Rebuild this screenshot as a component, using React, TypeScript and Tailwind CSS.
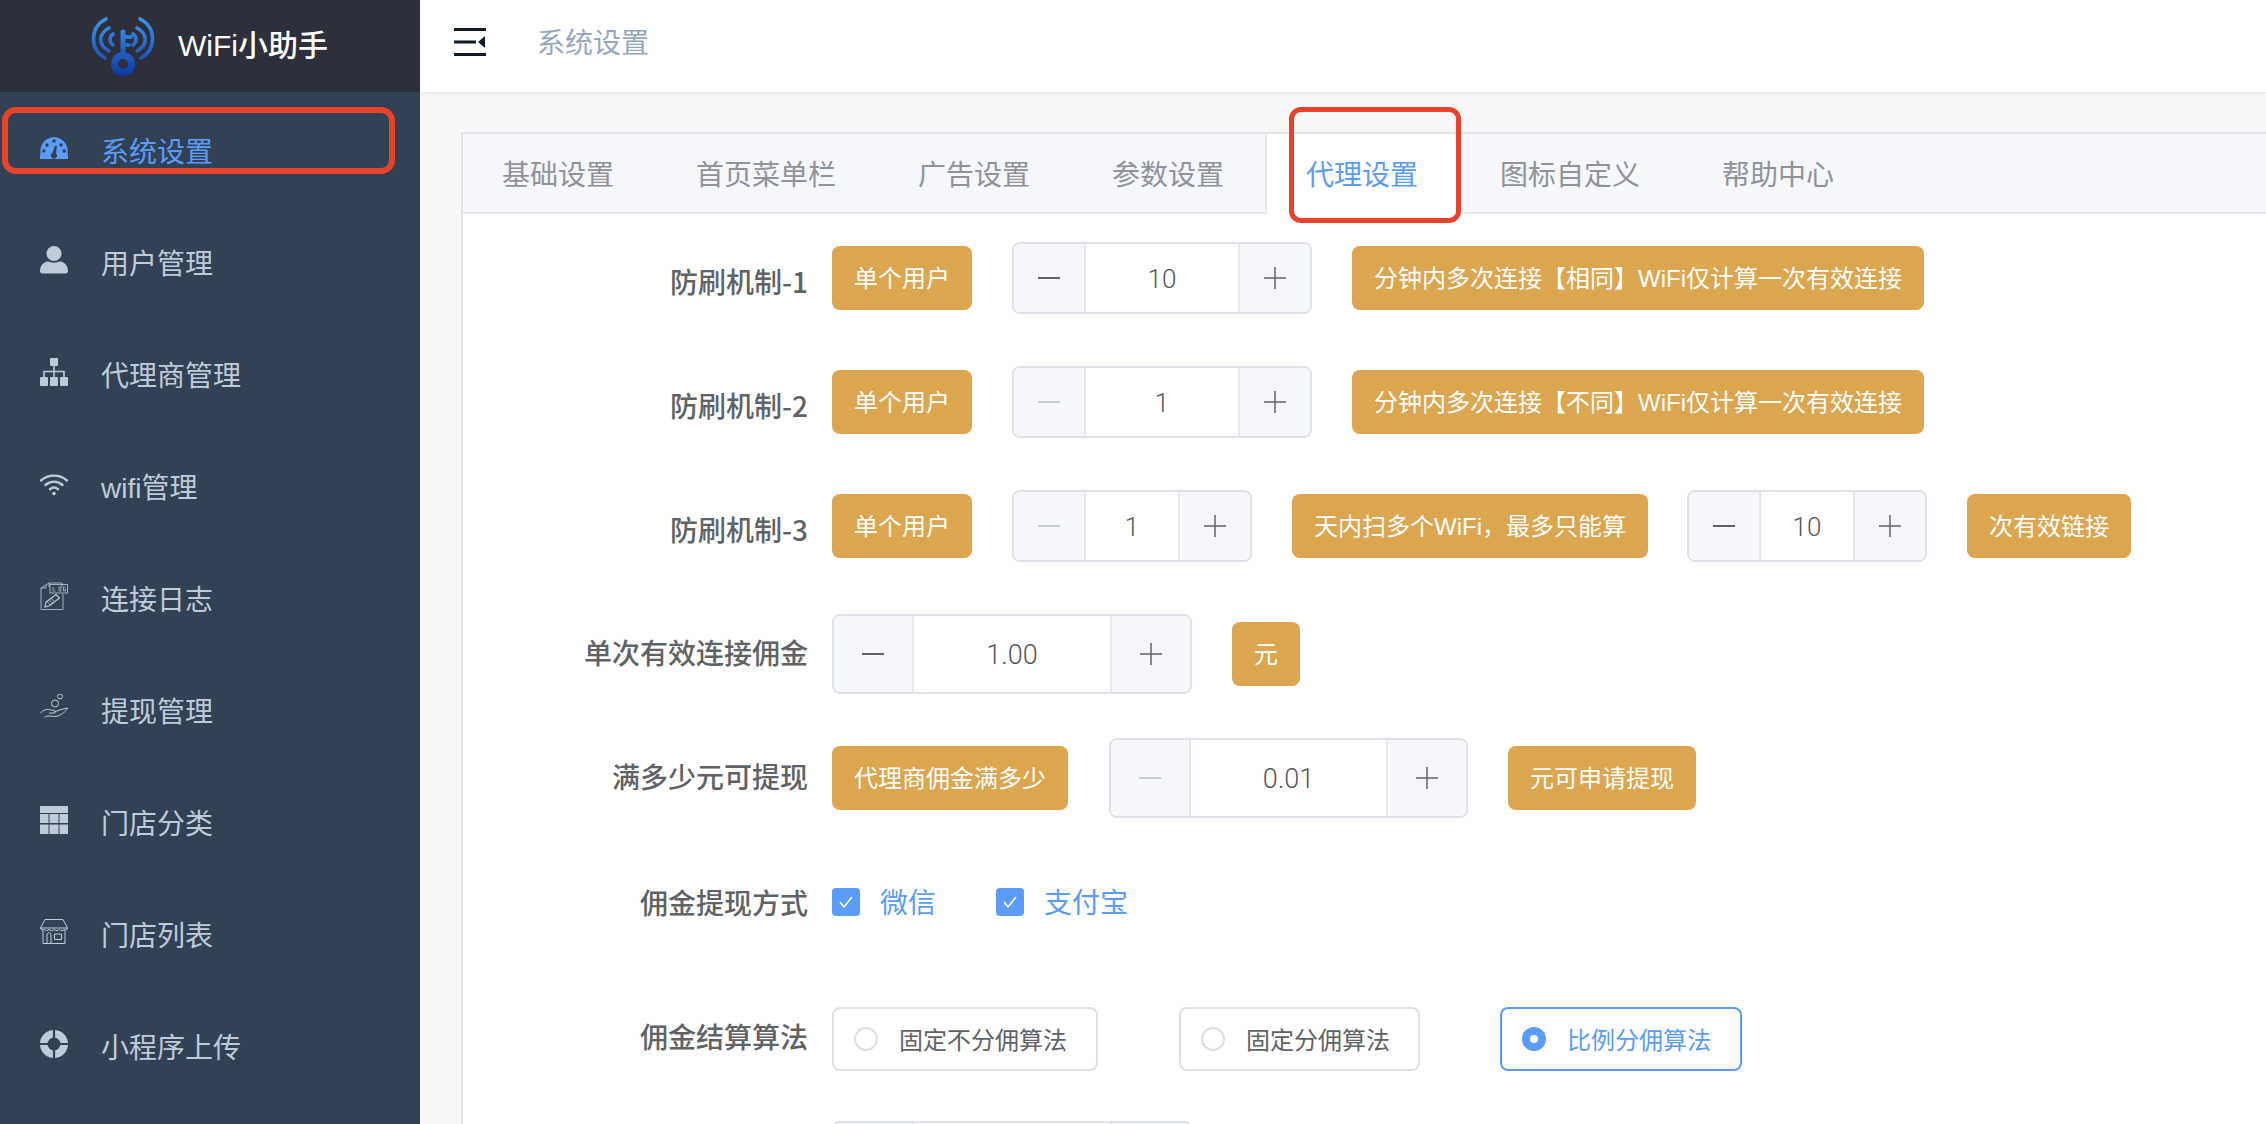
import { ReactNode } from 'react'

const iconProps = { width: 28, height: 28, viewBox: '0 0 28 28' }

function GaugeIcon() {
  return (
    <svg {...iconProps} fill="currentColor">
      <path d="M0 25c0-2 0-4 .5-6A14 14 0 0 1 14 3a14 14 0 0 1 13.5 16c.5 2 .5 4 .5 6z" />
      <g fill="#334155">
        <circle cx="3.800" cy="17" r="1.700" />
        <circle cx="7" cy="11" r="1.700" />
        <circle cx="14" cy="7" r="1.700" />
        <circle cx="21" cy="11" r="1.700" />
        <circle cx="24.200" cy="17" r="1.700" />
        <path d="M15.200 11.500l1.800.4-1 7.500a3 3 0 1 1-3.800-.3z" />
      </g>
    </svg>
  )
}

function UserIcon() {
  return (
    <svg {...iconProps} fill="currentColor">
      <circle cx="14" cy="7.500" r="7.500" />
      <path d="M0 25c0-5 3-9 8-9.500 4 1.500 8 1.500 12 0 5 .5 8 4.500 8 9.500 0 1.500-1 2.500-2.500 2.500h-23C1 27.500 0 26.500 0 25z" />
    </svg>
  )
}

function SitemapIcon() {
  return (
    <svg {...iconProps} fill="currentColor">
      <rect x="10" y="0" width="8" height="8" rx="1" />
      <rect x="0" y="19" width="8" height="9" rx="1" />
      <rect x="10" y="19" width="8" height="9" rx="1" />
      <rect x="20" y="19" width="8" height="9" rx="1" />
      <path d="M13.200 8h1.600v4.700H24.800V19h-1.600v-4.700h-8.400V19h-1.600v-4.700H4.800V19H3.200v-6.300h10z" />
    </svg>
  )
}

function WifiIcon() {
  return (
    <svg {...iconProps} fill="none" stroke="currentColor" strokeWidth="2.400" strokeLinecap="round">
      <path d="M1 10.500C8 4 20 4 27 10.500" />
      <path d="M5.500 15C10.500 10.500 17.500 10.500 22.500 15" />
      <path d="M10 19.200c2.500-2 5.500-2 8 0" />
      <circle cx="14" cy="23.500" r="1.800" fill="currentColor" stroke="none" />
    </svg>
  )
}

function LogIcon() {
  return (
    <svg {...iconProps} fill="none" stroke="currentColor" strokeWidth="0.800">
      <path d="M9 5V1h13v4M9 1L1 6v21.500h22V12" />
      <path d="M1 6h5V3" />
      <rect x="10" y="2.500" width="17.500" height="8.500" />
      <path d="M13 5v4h2.500M19 5h2v4h-2zM25.500 5H23.500v4h2V7h-1" strokeWidth="0.700" />
      <path d="M5 25l1-5L16 12.500l3.500 3.500L9 24z" strokeWidth="1.200" />
      <path d="M7 19.500l4 4M9 17.500l4 4M11 16l4 4" strokeWidth="0.800" />
    </svg>
  )
}

function HandIcon() {
  return (
    <svg {...iconProps} fill="none" stroke="currentColor" strokeWidth="1">
      <circle cx="20" cy="2.500" r="2.500" />
      <circle cx="15" cy="9.500" r="3.500" />
      <path d="M0.500 19c3-3 5.500-4 8-3.500l6 1c1.500.3 1.500 2.500-.5 2.500h-5" />
      <path d="M14 18l7-2.500 6.500-1.500c-1 2-2.500 4-5 5.500-3 2-6 3.500-9 3-3-.5-6-1-9 .5" />
    </svg>
  )
}

function GridIcon() {
  return (
    <svg {...iconProps} fill="currentColor">
      <rect x="0" y="0" width="28" height="7" />
      <rect x="0" y="8" width="8.500" height="9" />
      <rect x="9.500" y="8" width="9" height="9" />
      <rect x="19.500" y="8" width="8.500" height="9" />
      <rect x="0" y="18.500" width="8.500" height="9.500" />
      <rect x="9.500" y="18.500" width="9" height="9.500" />
      <rect x="19.500" y="18.500" width="8.500" height="9.500" />
    </svg>
  )
}

function ShopIcon() {
  return (
    <svg {...iconProps} fill="none" stroke="currentColor" strokeWidth="1">
      <path d="M5 1.500h18l4.500 8.500c0 2-2.300 2.500-3.400 1.500-1 1.500-3.400 1.500-4.600 0-1 1.500-3.800 1.500-5.500 0-1.500 1.500-3.800 1.500-5 0-1.200 1.500-3.600 1.500-4.600 0C3.200 12.500.5 12 .5 10z" />
      <path d="M.5 10h27M3 12v13.500h22V12" />
      <path d="M7 25.500V17c0-3 4-3 4 0v8.500M14.500 16h7v5.500h-7zM3 25.500h22" />
    </svg>
  )
}

function RingIcon() {
  return (
    <svg {...iconProps} fill="currentColor">
      <path
        fillRule="evenodd"
        d="M14 0a14 14 0 1 1 0 28a14 14 0 0 1 0-28zm0 7.500a6.500 6.500 0 1 0 0 13a6.500 6.500 0 0 0 0-13z"
      />
      <g stroke="#334155" strokeWidth="2.200">
        <path d="M14 0v8M14 20v8M0 14h8M20 14h8" />
      </g>
    </svg>
  )
}

function Logo() {
  return (
    <svg width="66" height="60" viewBox="9 8 66 60" fill="none">
      <defs>
        <linearGradient id="logoBlue" gradientUnits="userSpaceOnUse" x1="42" y1="8" x2="42" y2="68">
          <stop offset="0" stopColor="#3f9bec" />
          <stop offset="1" stopColor="#0e37a6" />
        </linearGradient>
      </defs>
      <g stroke="url(#logoBlue)" strokeLinecap="round" strokeWidth="3.600">
        <path d="M25 11C9 19 8 41 24 50" />
        <path d="M59 11C75 19 76 41 60 50" />
        <path d="M28 20C17 26 17 37 28 43" />
        <path d="M56 20C67 26 67 37 56 43" />
        <path d="M32 26C28 29 28 34 32 37" />
        <path d="M52 26C56 29 56 34 52 37" />
        <path d="M42 24V46" strokeWidth="5" />
        <path d="M42 29H50M42 37H48" strokeWidth="4" />
        <circle cx="42" cy="56" r="8.500" strokeWidth="7" />
      </g>
    </svg>
  )
}

function HamburgerIcon() {
  return (
    <svg width="32" height="28" viewBox="0 0 32 28" fill="#111827">
      <rect x="0" y="0" width="32" height="3" />
      <rect x="0" y="12.500" width="22" height="3" />
      <rect x="0" y="25" width="32" height="3" />
      <path d="M31 8v12l-7-6z" />
    </svg>
  )
}

const menuItems = [
  { name: '系统设置', icon: <GaugeIcon />, active: true },
  { name: '用户管理', icon: <UserIcon /> },
  { name: '代理商管理', icon: <SitemapIcon /> },
  { name: 'wifi管理', icon: <WifiIcon /> },
  { name: '连接日志', icon: <LogIcon /> },
  { name: '提现管理', icon: <HandIcon /> },
  { name: '门店分类', icon: <GridIcon /> },
  { name: '门店列表', icon: <ShopIcon /> },
  { name: '小程序上传', icon: <RingIcon /> },
]

const tabs = ['基础设置', '首页菜单栏', '广告设置', '参数设置', '代理设置', '图标自定义', '帮助中心']

function Tag({ children }: { children: ReactNode }) {
  return (
    <div className="h-[64px] shrink-0 flex items-center px-[22px] pt-[2px] bg-[#dba64f] rounded-[8px] text-white text-[24px] whitespace-nowrap">
      {children}
    </div>
  )
}

function Stepper({
  value,
  width,
  side = 'w-[72px]',
  big = false,
  minusDisabled = false,
}: {
  value: string
  width: string
  side?: string
  big?: boolean
  minusDisabled?: boolean
}) {
  return (
    <div className={`${width} ${big ? 'h-[80px]' : 'h-[72px]'} shrink-0 flex border-2 border-[#dfe1e8] rounded-[8px] overflow-hidden`}>
      <div className={`${side} flex items-center justify-center bg-[#f5f7fa] border-r-2 border-[#e4e7ed]`}>
        <svg width="24" height="24" viewBox="0 0 24 24" stroke={minusDisabled ? '#c8cbd2' : '#606266'} strokeWidth="2">
          <path d="M1 12h22" />
        </svg>
      </div>
      <div className={`flex-1 flex items-center justify-center pt-[3px] text-[#55575c] font-['Roboto',sans-serif] font-light ${big ? 'text-[27px]' : 'text-[26px]'}`}>
        {value}
      </div>
      <div className={`${side} flex items-center justify-center bg-[#f5f7fa] border-l-2 border-[#e4e7ed]`}>
        <svg width="24" height="24" viewBox="0 0 24 24" stroke="#606266" strokeWidth="1.500">
          <path d="M1 12h22M12 1v22" />
        </svg>
      </div>
    </div>
  )
}

function Row({
  label,
  className,
  labelClass = '',
  children,
}: {
  label: string
  className: string
  labelClass?: string
  children: ReactNode
}) {
  return (
    <div className={`flex items-center ${className}`}>
      <div className={`w-[345px] shrink-0 mr-[24px] text-right text-[28px] font-medium font-['Noto_Sans_CJK_SC',sans-serif] text-[#606266] whitespace-nowrap ${labelClass}`}>
        {label}
      </div>
      {children}
    </div>
  )
}

function Check({ label }: { label: string }) {
  return (
    <div className="flex items-center gap-[20px]">
      <div className="w-[28px] h-[28px] rounded-[4px] bg-[#5a9cf8] flex items-center justify-center">
        <svg width="16" height="14" viewBox="0 0 16 14" fill="none" stroke="#fff" strokeWidth="1.600">
          <path d="M2 7l4 5 8-10" />
        </svg>
      </div>
      <span className="text-[28px] pt-[3px] text-[#5a9cf8] leading-none">{label}</span>
    </div>
  )
}

function Radio({ label, checked = false, width }: { label: string; checked?: boolean; width: string }) {
  return (
    <div
      className={`${width} h-[64px] shrink-0 flex items-center gap-[21px] pl-[20px] border-2 rounded-[8px] text-[24px] ${
        checked ? 'border-[#5a9cf8] text-[#5a9cf8]' : 'border-[#dfe1e8] text-[#606266]'
      }`}
    >
      {checked ? (
        <span className="w-[24px] h-[24px] rounded-full bg-[#5a9cf8] flex items-center justify-center">
          <span className="w-[8px] h-[8px] rounded-full bg-white" />
        </span>
      ) : (
        <span className="w-[24px] h-[24px] rounded-full border-2 border-[#dcdfe6]" />
      )}
      <span className="pt-[3px]">{label}</span>
    </div>
  )
}

export default function App() {
  return (
    <div className="h-screen flex overflow-hidden bg-[#f7f7f8] font-['Liberation_Sans','Noto_Sans_CJK_SC',sans-serif]">
      <aside className="relative w-[420px] shrink-0 bg-[#334155]">
        <div className="h-[92px] bg-[#2d2f3a] flex items-center pl-[90px]">
          <Logo />
          <span className="ml-[22px] text-white text-[30px] font-medium leading-none">WiFi小助手</span>
        </div>
        {menuItems.map((item) => (
          <div
            key={item.name}
            className={`h-[112px] flex items-center pl-[40px] ${item.active ? 'text-[#5a9cf8]' : 'text-[#bfcbd9]'}`}
          >
            {item.icon}
            <span className="ml-[33px] text-[28px] mt-[10px]">{item.name}</span>
          </div>
        ))}
        <div className="absolute left-[2px] top-[107px] w-[393px] h-[67px] border-[6px] border-[#e8432a] rounded-[14px]" />
      </aside>

      <div className="flex-1 min-w-0 flex flex-col">
        <header className="h-[92px] shrink-0 bg-white flex items-center pl-[34px] shadow-[0_1px_4px_rgba(0,21,41,0.08)]">
          <div className="mb-[9px]">
            <HamburgerIcon />
          </div>
          <span className="ml-[51px] text-[28px] text-[#97a8be] mb-[4px]">系统设置</span>
        </header>

        <main className="relative flex-1 pt-[40px] pl-[41px] overflow-hidden">
          <div className="h-full bg-white border-t-2 border-l-2 border-[#e2e4ea]">
            <div className="flex h-[80px] bg-[#f5f7fa] border-b-2 border-[#e4e7ed]">
              {tabs.map((tab, i) => (
                <div
                  key={tab}
                  className={`h-[80px] flex items-center pt-[3px] text-[28px] whitespace-nowrap ${
                    i === 4
                      ? 'px-[39px] bg-white border-x-2 border-[#e4e7ed] text-[#5a9cf8]'
                      : 'px-[41px] text-[#909399] ' + (i === 0 ? '-ml-[2px]' : '')
                  }`}
                >
                  {tab}
                </div>
              ))}
            </div>

            <Row label="防刷机制-1" className="h-[72px] mt-[28px]" labelClass="pt-[5px]">
              <Tag>单个用户</Tag>
              <div className="ml-[40px]">
                <Stepper value="10" width="w-[300px]" />
              </div>
              <div className="ml-[40px]">
                <Tag>分钟内多次连接【相同】WiFi仅计算一次有效连接</Tag>
              </div>
            </Row>

            <Row label="防刷机制-2" className="h-[72px] mt-[52px]" labelClass="pt-[5px]">
              <Tag>单个用户</Tag>
              <div className="ml-[40px]">
                <Stepper value="1" width="w-[300px]" minusDisabled />
              </div>
              <div className="ml-[40px]">
                <Tag>分钟内多次连接【不同】WiFi仅计算一次有效连接</Tag>
              </div>
            </Row>

            <Row label="防刷机制-3" className="h-[72px] mt-[52px]" labelClass="pt-[5px]">
              <Tag>单个用户</Tag>
              <div className="ml-[40px]">
                <Stepper value="1" width="w-[240px]" minusDisabled />
              </div>
              <div className="ml-[40px]">
                <Tag>天内扫多个WiFi，最多只能算</Tag>
              </div>
              <div className="ml-[39px]">
                <Stepper value="10" width="w-[240px]" />
              </div>
              <div className="ml-[40px]">
                <Tag>次有效链接</Tag>
              </div>
            </Row>

            <Row label="单次有效连接佣金" className="h-[80px] mt-[52px]" labelClass="pb-[4px]">
              <Stepper value="1.00" width="w-[360px]" side="w-[80px]" big />
              <div className="ml-[40px]">
                <Tag>元</Tag>
              </div>
            </Row>

            <Row label="满多少元可提现" className="h-[80px] mt-[44px]" labelClass="pb-[4px]">
              <Tag>代理商佣金满多少</Tag>
              <div className="ml-[41px]">
                <Stepper value="0.01" width="w-[359px]" side="w-[80px]" big minusDisabled />
              </div>
              <div className="ml-[40px]">
                <Tag>元可申请提现</Tag>
              </div>
            </Row>

            <Row label="佣金提现方式" className="h-[28px] mt-[70px]">
              <Check label="微信" />
              <div className="ml-[60px]">
                <Check label="支付宝" />
              </div>
            </Row>

            <Row label="佣金结算算法" className="h-[64px] mt-[91px]" labelClass="mb-[7px]">
              <Radio label="固定不分佣算法" width="w-[266px]" />
              <div className="ml-[81px]">
                <Radio label="固定分佣算法" width="w-[241px]" />
              </div>
              <div className="ml-[80px]">
                <Radio label="比例分佣算法" width="w-[242px]" checked />
              </div>
            </Row>

            <Row label="" className="h-[80px] mt-[50px]">
              <Stepper value="" width="w-[360px]" side="w-[80px]" big />
            </Row>
          </div>
          <div className="absolute left-[869px] top-[15px] w-[172px] h-[116px] border-[5px] border-[#e8432a] rounded-[12px]" />
        </main>
      </div>
    </div>
  )
}
